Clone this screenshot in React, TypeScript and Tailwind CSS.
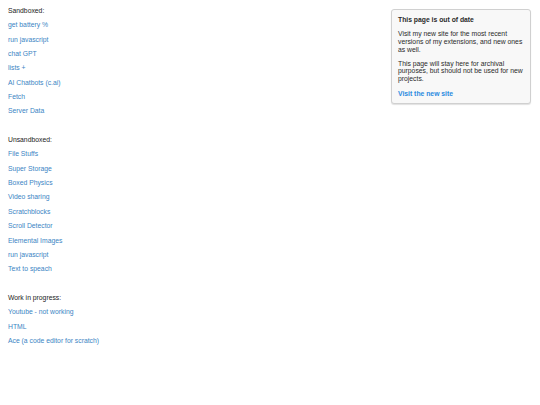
import React from "react";

const sections: { title: string; links: string[] }[] = [
  {
    title: "Sandboxed:",
    links: [
      "get battery %",
      "run javascript",
      "chat GPT",
      "lists +",
      "AI Chatbots (c.ai)",
      "Fetch",
      "Server Data",
    ],
  },
  {
    title: "Unsandboxed:",
    links: [
      "File Stuffs",
      "Super Storage",
      "Boxed Physics",
      "Video sharing",
      "Scratchblocks",
      "Scroll Detector",
      "Elemental Images",
      "run javascript",
      "Text to speach",
    ],
  },
  {
    title: "Work in progress:",
    links: ["Youtube - not working", "HTML", "Ace (a code editor for scratch)"],
  },
];

export default function App() {
  return (
    <div className="relative min-h-[405px] w-[540px] bg-white font-['Liberation_Sans',Arial,sans-serif] text-[6.8px] text-[#222]">
      <div className="flex flex-col gap-[14.35px] pl-2 pt-[4px]">
        {sections.map((section) => (
          <div key={section.title} className="flex flex-col">
            <p className="leading-[14.35px]">{section.title}</p>
            {section.links.map((link, i) => (
              <a key={i} className="leading-[14.35px] text-[#3b85c4]">
                {link}
              </a>
            ))}
          </div>
        ))}
      </div>

      {/* notice box */}
      <div className="absolute left-[391px] top-[9px] w-[140px] rounded-[3px] border border-[#d0d0d0] bg-[#f8f8f8] px-[6px] pb-[6px] pt-[6px] leading-[7.8px] text-[#2a2a2a] shadow-[0_1px_1px_rgba(0,0,0,0.12)]">
        <p className="font-bold">This page is out of date</p>
        <p className="mt-[6.5px]">
          Visit my new site for the most recent versions of my extensions, and
          new ones as well.
        </p>
        <p className="mt-[6px]">
          This page will stay here for archival purposes, but should not be
          used for new projects.
        </p>
        <a className="mt-[6.5px] block font-bold text-[#2a8ae0]">Visit the new site</a>
      </div>
    </div>
  );
}
